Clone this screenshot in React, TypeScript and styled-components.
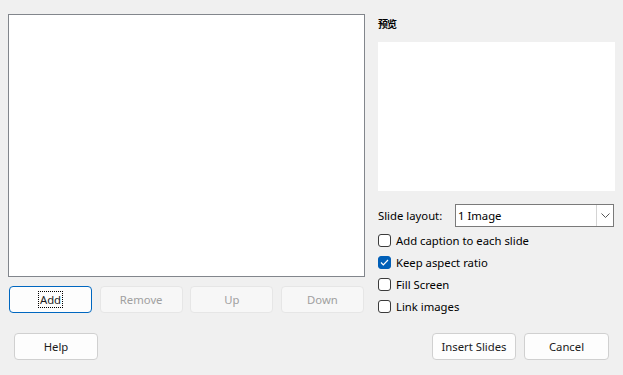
import React, { useState } from "react";
import styled, { createGlobalStyle } from "styled-components";

const GlobalStyle = createGlobalStyle`
	html, body {
		margin: 0;
		padding: 0;
		background: #f0f0f0;
	}
	body {
		font-family: "Noto Sans", "Liberation Sans", "Noto Sans CJK SC", sans-serif;
		font-size: 11.3px;
		color: #000;
	}
`;

const Dialog = styled.div`
	width: 623px;
	height: 375px;
	box-sizing: border-box;
	background: #f0f0f0;
	padding: 14px 8px 0 8px;
	display: flex;
	flex-direction: column;
`;

const Main = styled.div`
	display: flex;
	gap: 13px;
	flex-shrink: 0;
`;

const LeftColumn = styled.div`
	width: 357px;
	display: flex;
	flex-direction: column;
	gap: 9px;
`;

const ListBox = styled.div`
	height: 263px;
	flex-shrink: 0;
	box-sizing: border-box;
	background: #fff;
	border: 1px solid #82868c;
`;

const ButtonRow = styled.div`
	display: grid;
	grid-template-columns: repeat(4, 83px);
	justify-content: space-between;
	padding: 0 1px;
`;

const Button = styled.button<{ $primary?: boolean; $width?: number }>`
	height: 27px;
	width: ${(p) => (p.$width ? `${p.$width}px` : "auto")};
	box-sizing: border-box;
	padding: 0;
	border-radius: 4px;
	font-family: "Noto Sans", "Liberation Sans", sans-serif;
	font-size: 11.3px;
	color: #1b1b1b;
	background: #fdfdfd;
	border: 1px solid ${(p) => (p.$primary ? "#0067c0" : "#d0d0d0")};
	display: flex;
	align-items: center;
	justify-content: center;
	&:disabled {
		background: #f7f7f7;
		border-color: #e6e6e6;
		color: #a0a0a0;
	}
`;

const FocusText = styled.span`
	outline: 1px dotted #000;
	padding: 1px 1px 0 1px;
	line-height: 14px;
`;

const RightColumn = styled.div`
	width: 237px;
	display: flex;
	flex-direction: column;
	& > * {
		flex-shrink: 0;
	}
`;

const PreviewLabel = styled.div`
	font-family: "Noto Sans CJK SC", sans-serif;
	font-size: 10px;
	font-weight: 700;
	line-height: 14px;
	margin-top: 3px;
	height: 14px;
	letter-spacing: -1px;
`;

const Preview = styled.div`
	margin-top: 11px;
	height: 149px;
	background: #fff;
`;

const LayoutRow = styled.div`
	display: flex;
	align-items: center;
	margin-top: 13px;
	height: 23px;
`;

const LayoutLabel = styled.label`
	width: 77px;
`;

const Select = styled.div`
	width: 159px;
	height: 23px;
	box-sizing: border-box;
	background: #fff;
	border: 1px solid #7a7a7a;
	display: flex;
	align-items: stretch;
`;

const SelectValue = styled.div`
	flex: 1;
	display: flex;
	align-items: center;
	padding-left: 2px;
`;

const SelectArrow = styled.div`
	width: 16px;
	border-left: 1px solid #d4d4d4;
	display: flex;
	align-items: center;
	justify-content: center;
`;

const Options = styled.div`
	display: flex;
	flex-direction: column;
	gap: 5px;
	margin-top: 5px;
`;

const CheckRow = styled.label`
	display: flex;
	align-items: center;
	gap: 5px;
	height: 17px;
	cursor: default;
`;

const Box = styled.span<{ $checked: boolean }>`
	width: 13px;
	height: 13px;
	box-sizing: border-box;
	border-radius: 3px;
	border: 1px solid ${(p) => (p.$checked ? "#005fb8" : "#3b3b3b")};
	background: ${(p) => (p.$checked ? "#005fb8" : "#fff")};
	display: flex;
	align-items: center;
	justify-content: center;
`;

const Footer = styled.div`
	display: flex;
	align-items: center;
	margin-top: 18px;
	padding: 0 6px;
	gap: 8px;
`;

const Spacer = styled.div`
	flex: 1;
`;

const options = [
	{ key: "caption", label: "Add caption to each slide", checked: false },
	{ key: "aspect", label: "Keep aspect ratio", checked: true },
	{ key: "fill", label: "Fill Screen", checked: false },
	{ key: "link", label: "Link images", checked: false },
];

const App = () => {
	const [checks, setChecks] = useState(options.map((o) => o.checked));

	const toggle = (index: number) => {
		setChecks(checks.map((c, i) => (i === index ? !c : c)));
	};

	return (
		<>
			<GlobalStyle />
			<Dialog>
				<Main>
					<LeftColumn>
						<ListBox />
						<ButtonRow>
							<Button $primary>
								<FocusText>Add</FocusText>
							</Button>
							<Button disabled>Remove</Button>
							<Button disabled>Up</Button>
							<Button disabled>Down</Button>
						</ButtonRow>
					</LeftColumn>
					<RightColumn>
						<PreviewLabel>预览</PreviewLabel>
						<Preview />
						<LayoutRow>
							<LayoutLabel>Slide layout:</LayoutLabel>
							<Select>
								<SelectValue>1 Image</SelectValue>
								<SelectArrow>
									<svg width="9" height="5" viewBox="0 0 9 5">
										<path d="M0.5 0.5 L4.5 4.5 L8.5 0.5" fill="none" stroke="#555" strokeWidth="1" />
									</svg>
								</SelectArrow>
							</Select>
						</LayoutRow>
						<Options>
							{options.map((o, i) => (
								<CheckRow key={o.key} onClick={() => toggle(i)}>
									<Box $checked={checks[i]}>
										{checks[i] && (
											<svg width="9" height="7" viewBox="0 0 9 7">
												<path d="M1 3.5 L3.3 5.8 L8 1" fill="none" stroke="#fff" strokeWidth="1.2" />
											</svg>
										)}
									</Box>
									{o.label}
								</CheckRow>
							))}
						</Options>
					</RightColumn>
				</Main>
				<Footer>
					<Button $width={84}>Help</Button>
					<Spacer />
					<Button $width={84}>Insert Slides</Button>
					<Button $width={85}>Cancel</Button>
				</Footer>
			</Dialog>
		</>
	);
};

export default App;
